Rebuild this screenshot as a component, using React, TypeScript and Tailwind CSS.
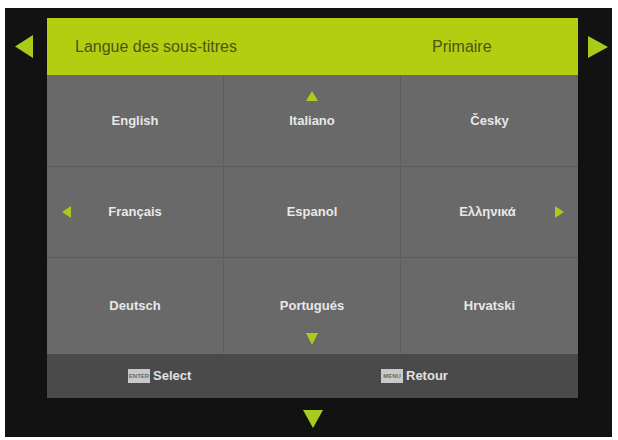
import React from 'react';

const Tri: React.FC<{ dir: 'left' | 'right' | 'up' | 'down'; w: number; h: number }> = ({ dir, w, h }) => {
  const pts =
    dir === 'left'
      ? `${w},0 ${w},${h} 0,${h / 2}`
      : dir === 'right'
      ? `0,0 0,${h} ${w},${h / 2}`
      : dir === 'up'
      ? `0,${h} ${w},${h} ${w / 2},0`
      : `0,0 ${w},0 ${w / 2},${h}`;
  return (
    <svg width={w} height={h} viewBox={`0 0 ${w} ${h}`} className="block">
      <polygon points={pts} fill="#a9cc1c" />
    </svg>
  );
};

const rows = [
  ['English', 'Italiano', 'Česky'],
  ['Français', 'Espanol', 'Ελληνικά'],
  ['Deutsch', 'Portugués', 'Hrvatski'],
];

const rowHeights = ['h-[92px]', 'h-[91px]', 'h-[96px]'];

const Key: React.FC<{ label: string }> = ({ label }) => (
  <div className="w-[22px] h-[14px] bg-[#c9c9c9] flex items-center justify-center text-[6px] leading-none font-bold text-[#6a6a6a]">
    {label}
  </div>
);

export default function App() {
  return (
    <div
      className="w-[618px] h-[440px] bg-white pt-[8px] pl-[5px] pr-[6px] pb-[3px]"
      style={{ fontFamily: '"Liberation Sans", Arial, sans-serif' }}
    >
      <div className="h-full bg-[#121212] flex flex-col pt-[10px]">
        {/* header */}
        <div className="flex items-center h-[57px]">
          <div className="w-[42px] pl-[10px]">
            <Tri dir="left" w={18} h={23} />
          </div>
          <div className="flex-1 h-full bg-[#b3ce10] flex items-center text-[16px] text-[#485712]">
            <span className="pl-[28px] w-[385px]">Langue des sous-titres</span>
            <span>Primaire</span>
          </div>
          <div className="w-[34px] pl-[10px]">
            <Tri dir="right" w={20} h={22} />
          </div>
        </div>

        {/* list panel */}
        <div className="ml-[42px] mr-[34px] bg-[#696969]">
          {rows.map((row, ri) => (
            <div key={ri} className={`grid grid-cols-3 ${rowHeights[ri]} ${ri < 2 ? 'border-b border-[#5b5b5b]' : ''}`}>
              {row.map((lang, ci) => (
                <div
                  key={lang}
                  className={`relative flex items-center justify-center text-[13px] font-bold text-[#e8e8e8] ${
                    ci < 2 ? 'border-r border-[#5e5e5e]' : ''
                  }`}
                >
                  {ri === 0 && ci === 1 && (
                    <div className="absolute top-[16px] left-1/2 -translate-x-1/2">
                      <Tri dir="up" w={12} h={10} />
                    </div>
                  )}
                  {ri === 2 && ci === 1 && (
                    <div className="absolute bottom-[9px] left-1/2 -translate-x-1/2">
                      <Tri dir="down" w={12} h={12} />
                    </div>
                  )}
                  {ri === 1 && ci === 0 && (
                    <div className="absolute left-[15px] top-1/2 -translate-y-1/2">
                      <Tri dir="left" w={9} h={12} />
                    </div>
                  )}
                  {ri === 1 && ci === 2 && (
                    <div className="absolute right-[14px] top-1/2 -translate-y-1/2">
                      <Tri dir="right" w={9} h={12} />
                    </div>
                  )}
                  <span className={ri === 1 && ci === 2 ? 'pr-[4px]' : ''}>{lang}</span>
                </div>
              ))}
            </div>
          ))}
          {/* footer */}
          <div className="h-[44px] bg-[#4a4a4a] flex items-center text-[13px] font-bold text-[#e2e2e2]">
            <div className="flex items-center gap-[3px] pl-[81px] w-[334px]">
              <Key label="ENTER" />
              <span>Select</span>
            </div>
            <div className="flex items-center gap-[3px]">
              <Key label="MENU" />
              <span>Retour</span>
            </div>
          </div>
        </div>

        {/* bottom arrow */}
        <div className="ml-[42px] mr-[34px] flex justify-center pt-[12px]">
          <Tri dir="down" w={20} h={18} />
        </div>
      </div>
    </div>
  );
}
